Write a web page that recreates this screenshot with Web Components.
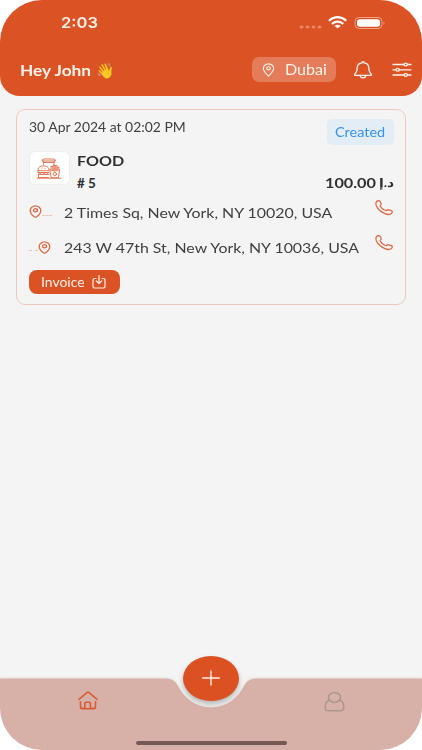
<!DOCTYPE html>
<html lang="en">
<head>
<meta charset="utf-8">
<title>Orders</title>
<style>
html,body{margin:0;background:#fff}
body{width:422px;height:750px;overflow:hidden;font-family:Lato,"DejaVu Sans",sans-serif}
</style>
</head>
<body>
<order-app></order-app>
<script>
const define=(name,html,after)=>customElements.define(name,class extends HTMLElement{
  connectedCallback(){
    if(this.shadowRoot)return;
    const t=document.createElement('template');
    t.innerHTML=html;
    this.attachShadow({mode:'open'}).append(t.content.cloneNode(true));
    if(after)after(this);
  }
});

// A single line of text stretched horizontally to the width in its w attribute.
define('wide-text',`<style>
:host{display:block;white-space:nowrap;line-height:20px;height:20px}
span{display:inline-block;transform-origin:0 50%}
</style><span><slot></slot></span>`,el=>{
  const s=el.shadowRoot.querySelector('span'),w=+el.getAttribute('w');
  el.style.width=w+'px';
  s.style.transform='scaleX('+w/s.offsetWidth+')';
});

const icons={
  pin:[13,14,'<path d="M6.500 13.200C5.500 11.500 1.300 8.800 1.300 5.600a5.200 4.700 0 0 1 10.400 0C11.700 8.800 7.500 11.500 6.500 13.200Z"/><ellipse cx="6.500" cy="5.300" rx="1.900" ry="1.600"/>'],
  marker:[13,13,'<path d="M5.400 11.800C3.500 10.500 1.200 8.500 1.200 5.500a5.300 4.600 0 0 1 10.600 0C11.800 8.500 9.500 10.500 7.600 11.800q-1.100.8-2.200 0Z"/><ellipse cx="6.500" cy="5.300" rx="2" ry="1.600"/>'],
  bell:[20,20,'<path d="M2 15.400c-1.200-.8.2-1.700 1.100-3 1.200-1.800.9-3.200 1.100-5C4.500 4.600 6.600 3.200 9 2.900V2.100q1-.9 2 0v.8c2.400.3 4.500 1.700 4.800 4.500.2 1.800-.1 3.200 1.100 5 .9 1.300 2.300 2.200 1.100 3Z"/><path d="M7.200 15.500c.2 3.200 5.400 3.200 5.600 0"/>'],
  filter:[20,16,'<path d="M1 2.500h11M15.500 2.500H19M1 7.800h3M7.500 7.800H19M1 13h11M15.500 13H19"/><ellipse cx="13.700" cy="2.500" rx="1.700" ry="1.400"/><ellipse cx="5.700" cy="7.800" rx="1.700" ry="1.400"/><ellipse cx="13.700" cy="13" rx="1.700" ry="1.400"/>'],
  phone:[18,16,'<path d="M1.600 1.500C2.600.6 4.400.4 5 1.300L6.200 3.500C6.600 4.300 5 5 5.200 5.900 6 7.800 8 9.600 10.500 10.500c1.300.4 1.900-1 3-.7l3 .9c1.200.6.800 2-.1 2.800-1.600 1.300-4 1.200-6.400.1C5.800 11.800 2.800 9 1.300 5.700.7 4.200.6 2.500 1.600 1.500Z"/>'],
  save:[14,14,'<path d="M4 3.500H3Q1 3.500 1 5.500v5.700Q1 13 3 13h8q2 0 2-1.800V5.500q0-2-2-2h-1M7 .5v7.800M4.300 6 7 8.500 9.700 6"/>'],
  home:[20,19,'<path d="M1 8.300 9.200 1.300q.8-.6 1.600 0L19 8.300"/><path d="M2.500 10.800V16q0 1.700 1.700 1.700h11.600q1.700 0 1.700-1.700v-5.200M3 17.300h3.800V12.500q0-1.200 1.200-1.200h3.200q1.200 0 1.200 1.200v4.800H17"/>'],
  user:[21,21,'<ellipse cx="10.500" cy="6.400" rx="6" ry="5"/><path d="M5.300 9.200C2.500 10 1.200 12.500 1.200 16.200q0 3.500 3.300 3.500h12q3.300 0 3.300-3.500C19.800 12.500 18.500 10 15.700 9.200"/>'],
  plus:[18,16,'<path d="M.7 8h16.600M9 1v14"/>'],
  food:[24,21,'<path d="M5 2.600Q5 1 7 1h9.500q2 0 2 1.600ZM6.200 2.800 6.600 7M17.300 2.800 16.900 7M6.500 4.500h10.500M1 12.300C1 9 3.300 8 6.500 8s5.500 1 5.500 4.300ZM1 12.300v2.200h11M1 14.500l2 1 2-1 2 1 2-1 2 1M1.500 16.500h10.500M1.500 16.500v3h10M13 11.500l1 8.200h7.500l1-8.200q-4.700 3-9.500 0ZM14 11.500v-3h2v3.500M16 12V7.200h2V12M18 12V7.500h2v4M20 11.500V9h1.800v2.300M0 20.200h24"/><circle cx="17.800" cy="16" r="1.700"/><path d="M5 10h.1M8 10.500h.1"/>']
};
define('line-icon',`<style>:host{display:block;flex:none}svg{display:block;overflow:visible;fill:none;stroke:currentColor;stroke-linecap:round;stroke-linejoin:round}</style>`,el=>{
  const [w,h,p]=icons[el.getAttribute('name')];
  el.shadowRoot.innerHTML+=`<svg width="${el.getAttribute('w')||w}" height="${el.getAttribute('h')||h}" preserveAspectRatio="none" viewBox="0 0 ${w} ${h}" stroke-width="${el.getAttribute('sw')||1.2}">${p}</svg>`;
});

define('status-bar',`<style>
:host{display:flex;height:46px;padding:0 37px 0 61px;box-sizing:border-box;color:#fff3ec}
wide-text{font:600 15px/20px Inter,sans-serif;margin-top:13px;margin-right:auto}
svg{display:block;margin-top:15px}
</style>
<wide-text w="37.500">2:03</wide-text>
<svg width="86" height="16" viewBox="0 0 86 16"><g fill="#ea8a65"><ellipse cx="2.500" cy="11.900" rx="2" ry="1.500"/><ellipse cx="8.500" cy="11.900" rx="2" ry="1.500"/><ellipse cx="14.500" cy="11.900" rx="2" ry="1.500"/><ellipse cx="20.500" cy="11.900" rx="2" ry="1.500"/></g>
<g fill="none" stroke="#fff" stroke-width="2.100"><path d="M29.900 5.700q8.700-7 17.400 0M32.900 8.800q5.700-4.300 11.400 0"/></g><path d="M35.500 11q3.100-2.300 6.200 0L38.600 13.300Z" fill="#fff"/>
<rect x="56" y="2.500" width="27" height="11" rx="4" fill="none" stroke="#f0a286"/><rect x="58" y="4.200" width="23" height="7.600" rx="2.700" fill="#fff"/><path d="M84.500 6.200q2 1.800 0 3.600Z" fill="#f0a286"/></svg>`);

define('app-header',`<style>
:host{display:block;height:95.500px;background:#db5224;border-radius:0 0 20px 20px;color:#fff3ec}
.bar{display:flex;align-items:center;height:47px;padding:0 10.500px 0 20px}
.hey{font-size:15.500px;font-weight:700;margin-right:4px;margin-top:1px}
.wave{font-size:15px;margin-right:auto;margin-top:1px}
.city{display:flex;align-items:center;box-sizing:border-box;width:84px;height:25px;padding:0 8.500px 0 10px;border-radius:7px;background:#e47c59;justify-content:space-between;margin-right:17px}
.city wide-text{font-size:14.500px;margin-top:1px}
.f{margin-left:19px}
</style>
<status-bar></status-bar>
<div class="bar"><wide-text class="hey" w="71.500">Hey John</wide-text><wide-text class="wave" w="19">👋</wide-text>
<div class="city"><line-icon name="pin" sw="1.100"></line-icon><wide-text w="42">Dubai</wide-text></div>
<line-icon name="bell" sw="1.300"></line-icon><line-icon class="f" name="filter" sw="1.300"></line-icon></div>`);

define('address-row',`<style>
:host{display:flex;height:35.500px;color:#3f3f41}
.track{display:flex;width:23.500px;margin-right:12px;color:#df6842;align-items:flex-start}
.track i{flex:1;height:12px;border-bottom:1px dashed #f1c5b6}
:host([end]) .track{flex-direction:row-reverse;width:22.500px;margin-right:13px}
wide-text{font-size:14px;margin-right:auto}
.ph{color:#df6842;margin:-3px 1px 0 0}
</style><div class="track"><line-icon name="marker" sw="1.300" style="margin-top:2.500px"></line-icon><i></i></div><wide-text><slot></slot></wide-text><line-icon class="ph" name="phone" sw="1.300"></line-icon>`,el=>{
  const old=el.shadowRoot.querySelector('wide-text'),n=document.createElement('wide-text');
  n.setAttribute('w',el.getAttribute('w'));n.textContent=el.textContent;old.replaceWith(n);
});

define('order-card',`<style>
:host{display:block;box-sizing:border-box;margin:13px 16px 0;height:196.500px;border:1px solid #efc7bc;border-radius:9px;padding:9px 11.500px 0 11.500px;color:#303033}
.row{display:flex;justify-content:space-between}
.top{height:32.500px}
.date{font-size:12.700px;margin-top:-2px;color:#3f3f41}
.chip{display:flex;align-items:center;justify-content:center;width:67px;height:26px;border-radius:5px;background:#e3edf6;color:#3593ec;font-size:13px}
.item{display:flex;height:51.500px}
.tile{display:flex;align-items:center;justify-content:center;width:39px;height:32px;background:#fff;border:1px solid #eee;border-radius:6px;margin-right:7.500px;color:#df6b46}
.name{flex:1;font-weight:700}
.food{font-size:14px}.num{font-size:13.500px}
.sub{display:flex;justify-content:space-between;margin-top:2px}
.price{display:flex;gap:3px;font-size:13.500px}
.btn{display:flex;align-items:center;box-sizing:border-box;width:91px;height:24px;border-radius:8px;background:#db5224;color:#fff0e8;padding:0 14px 0 12px;justify-content:space-between;font-size:13px}
</style>
<div class="row top"><wide-text class="date" w="157">30 Apr 2024 at 02:02 PM</wide-text><div class="chip"><wide-text w="50">Created</wide-text></div></div>
<div class="item"><div class="tile"><line-icon name="food" sw=".9"></line-icon></div><div class="name"><wide-text class="food" w="47">FOOD</wide-text><div class="sub"><wide-text class="num" w="19">&#35; 5</wide-text><div class="price"><wide-text w="50.500">100.00</wide-text><wide-text w="15" style="font-size:12px">د.إ</wide-text></div></div></div></div>
<address-row w="268">2 Times Sq, New York, NY 10020, USA</address-row>
<address-row end w="295">243 W 47th St, New York, NY 10036, USA</address-row>
<div class="btn" style="margin-top:-3.500px"><wide-text w="44">Invoice</wide-text><line-icon name="save" sw="1.200"></line-icon></div>`);

define('tab-bar',`<style>
:host{display:block;position:relative;height:96px}
.bg{display:block;filter:drop-shadow(0 -1px 1px #e6dfdc)}
.tabs{position:absolute;inset:37px 77.500px auto 78px;display:flex;justify-content:space-between}
.add{position:absolute;left:183px;top:1.500px;width:56px;height:45px;border-radius:50%;background:#dc5122;color:#fff0e8;display:flex;align-items:center;justify-content:center;box-shadow:0 3px 5px #0004}
.pill{position:absolute;left:135.500px;bottom:5.500px;width:151px;height:4px;border-radius:2px;background:#765955}
</style>
<svg class="bg" width="422" height="96"><path fill="#d7b1a7" d="M0 24.500H163C173 24.500 175 27 178 32C184 44 195 53.500 211 53.500S238 44 244 32C247 27 249 24.500 259 24.500H422V96H0Z"/></svg>
<div class="tabs"><line-icon name="home" sw="1.600" style="color:#db5c34"></line-icon><line-icon name="user" sw="1.500" style="color:#aa968f"></line-icon></div>
<div class="add"><line-icon name="plus" sw="1.400"></line-icon></div><div class="pill"></div>`);

define('order-app',`<style>
:host{display:flex;flex-direction:column;width:422px;height:750px;overflow:hidden;border-radius:42px/42px;background:#f4f4f4}
tab-bar{margin-top:auto}
</style><app-header></app-header><order-card></order-card><tab-bar></tab-bar>`);
</script>
</body>
</html>
